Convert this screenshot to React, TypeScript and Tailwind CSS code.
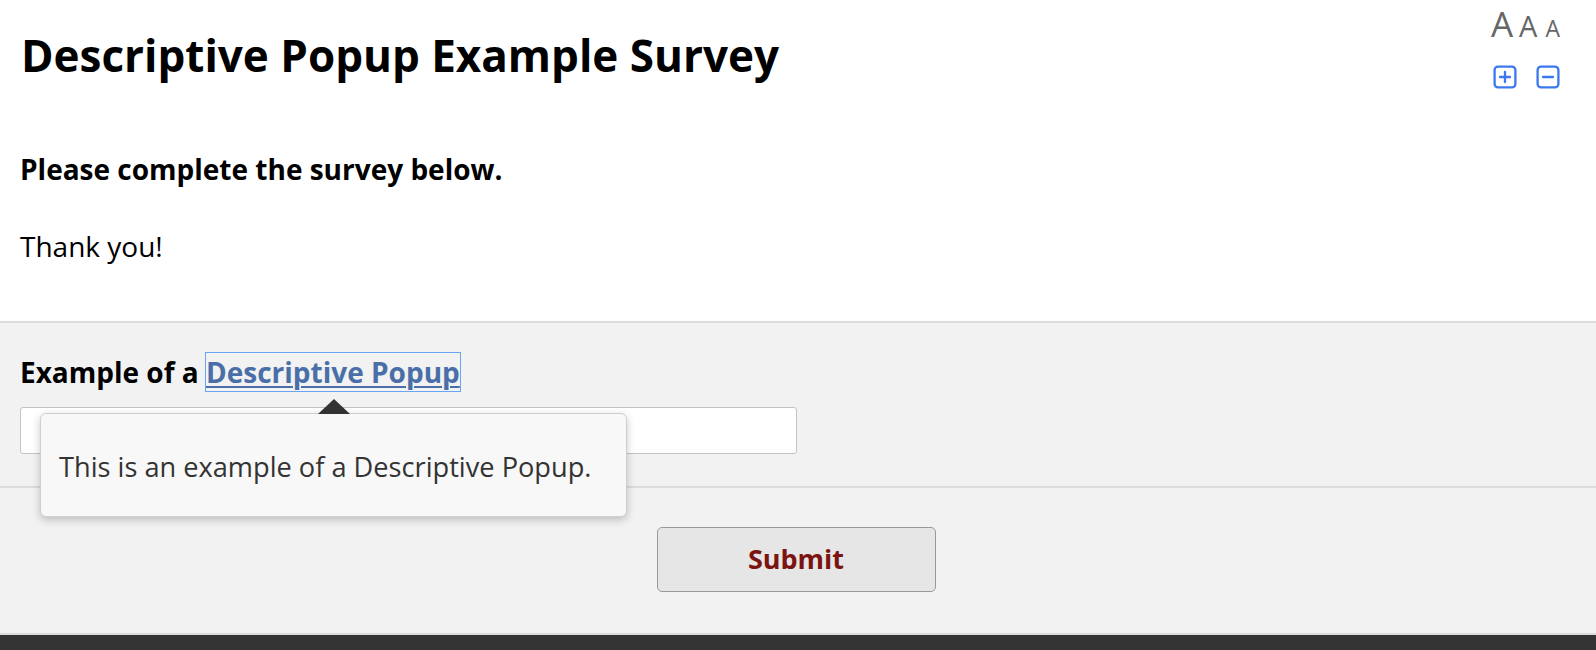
import React from "react";

function BoxIcon({ minus }: { minus?: boolean }) {
  return (
    <svg width="24" height="24" viewBox="0 0 24 24" fill="none" stroke="#3b78f0" strokeWidth="2.3" strokeLinecap="round" aria-hidden="true">
      <rect x="1.6" y="1.6" width="20.8" height="20.8" rx="3.5" />
      <line x1="7" y1="12" x2="17" y2="12" />
      {!minus && <line x1="12" y1="7" x2="12" y2="17" />}
    </svg>
  );
}

function FontSizer() {
  return (
    <div className="flex flex-col pt-[6px] pr-[36px]">
      <div className="flex items-baseline text-[#666] leading-none">
        <span className="text-[35px]">A</span>
        <span className="ml-[6px] text-[29px]">A</span>
        <span className="ml-[8px] text-[23px]">A</span>
      </div>
      <div className="mt-[24px] ml-[2px] flex gap-[19px]">
        <BoxIcon />
        <BoxIcon minus />
      </div>
    </div>
  );
}

export default function App() {
  return (
    <div className="min-h-[650px] bg-white text-black font-['Open_Sans',sans-serif]">
      <div className="pb-[56px]">
        <div className="flex h-[82px] items-start justify-between">
          <h1 className="pt-[27px] pl-[21px] text-[44px] font-bold leading-[56px]">Descriptive Popup Example Survey</h1>
          <FontSizer />
        </div>
        <div className="mt-[68px] px-5 text-[28px] leading-[38px]">
          <p className="font-bold">Please complete the survey below.</p>
          <p className="mt-[39px]">Thank you!</p>
        </div>
      </div>

      <div className="relative border-t-2 border-[#dcdcdc] bg-[#f2f2f2]">
        <div className="px-5 pt-[30px] pb-[32px]">
          <p className="text-[28px] font-bold leading-[38px]">
            Example of a{" "}
            <a href="#" className="text-[#4a6fa8] underline underline-offset-[3px] decoration-[1.5px] outline-[1.5px] outline-[#6aa4f4]">
              Descriptive Popup
            </a>
          </p>
          <div className="mt-4 h-[47px] w-[777px] rounded-[3px] border border-[#c4c4c4] bg-white" />
        </div>

        {/* popup */}
        <div className="absolute left-[40px] top-[90px] h-[104px] w-[587px] rounded-[6px] border border-[#cfcfcf] bg-[#f8f8f8] pl-[18px] pt-[34px] text-[27.2px] leading-[38px] text-[#333] shadow-[0_3px_8px_rgba(0,0,0,0.22)]">
          <div className="absolute left-[277px] top-[-15px] h-0 w-0 border-x-[16px] border-b-[15px] border-x-transparent border-b-[#333]" />
          This is an example of a Descriptive Popup.
        </div>

        <div className="flex justify-center border-t-2 border-[#dcdcdc] pt-[39px] pb-[41px] pr-[4px]">
          <button className="h-[65px] w-[279px] rounded-[5px] border border-[#999] bg-[#e6e6e6] text-[27px] font-bold text-[#7b1410]">
            Submit
          </button>
        </div>
        <div className="h-[17px] border-t-2 border-[#dcdcdc] bg-[#333]" />
      </div>
    </div>
  );
}
